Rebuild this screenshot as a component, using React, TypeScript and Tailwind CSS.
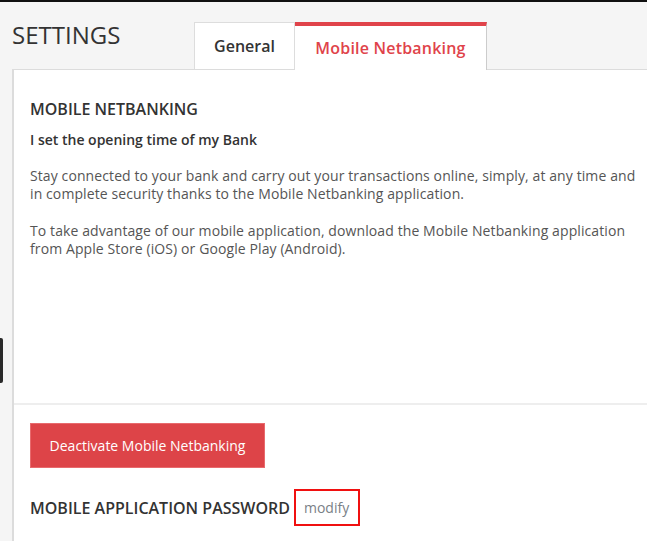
import React from 'react';

export default function App() {
  return (
    <div className="relative w-[647px] h-[541px] overflow-hidden bg-[#f5f5f5] font-['Open_Sans',sans-serif] text-[#333]">
      <div className="h-[2px] bg-[#111]" />

      {/* Header: title + tabs */}
      <div className="flex items-end h-[67px]">
        <h1 className="w-[194px] self-start pl-[12px] pt-[17px] text-[24px] leading-[32px] font-normal text-[#333]">
          SETTINGS
        </h1>
        <div className="flex items-end">
          <div className="w-[101px] h-[47px] bg-white border border-b-0 border-[#ddd] flex items-center justify-center text-[16px] font-semibold text-[#333]">
            General
          </div>
          <div className="w-[192px] h-[48px] bg-white border-t-4 border-t-[#e0434a] border-r border-r-[#ccc] flex items-center justify-center text-[16px] tracking-[0.2px] font-semibold text-[#e0434a] relative z-10 -mb-px">
            Mobile Netbanking
          </div>
        </div>
      </div>

      {/* Panel */}
      <div className="ml-[12px] h-[500px] bg-white border-l-2 border-t border-[#dcdcdc]">
        <div className="pl-[16px] pr-[8px] pt-[27px] h-[333px]">
          <h2 className="text-[16px] leading-[24px] font-semibold text-[#333]">MOBILE NETBANKING</h2>
          <p className="mt-[9px] text-[14px] leading-[20px] font-semibold text-[#333]">
            I set the opening time of my Bank
          </p>
          <p className="mt-[17px] text-[14px] leading-[18px] tracking-[0.1px] text-[#555]">
            Stay connected to your bank and carry out your transactions online, simply, at any time and in complete security thanks to the Mobile Netbanking application.
          </p>
          <p className="mt-[19px] text-[14px] leading-[18px] tracking-[0.1px] text-[#555]">
            To take advantage of our mobile application, download the Mobile Netbanking application from Apple Store (iOS) or Google Play (Android).
          </p>
        </div>
        <div className="h-[2px] bg-[#eeeeee]" />
        <div className="pl-[16px] pt-[18px]">
          <button className="w-[235px] h-[45px] bg-[#dd4448] border border-[#e86a6d] text-white text-[14px] leading-[20px]">
            Deactivate Mobile Netbanking
          </button>
          <div className="mt-[21px] flex items-center">
            <span className="text-[16px] font-semibold text-[#333]">MOBILE APPLICATION PASSWORD</span>
            <span className="ml-[4px] w-[66px] h-[37px] border-2 border-[#f01010] flex items-center pl-[8px] text-[14px] text-[#7a7f87]">
              modify
            </span>
          </div>
        </div>
      </div>

      {/* dark edge on left */}
      <div className="absolute left-0 top-[338px] w-[3px] h-[45px] bg-[#2a2a2a] rounded-r-[2px]" />
    </div>
  );
}
